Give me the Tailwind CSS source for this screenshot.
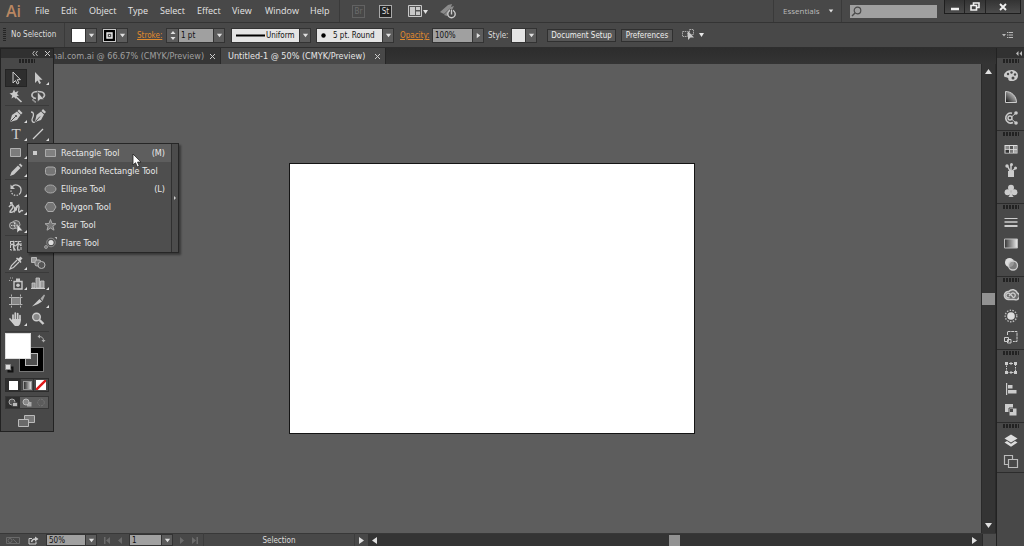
<!DOCTYPE html>
<html lang="en">
<head>
<meta charset="utf-8">
<title>Illustrator workspace</title>
<script src="https://cdn.jsdelivr.net/npm/@tailwindcss/browser@4"></script>
</head>
<body class="h-screen overflow-hidden flex flex-col bg-[#484848] text-[#dedede] font-['DejaVu_Sans_Condensed','DejaVu_Sans',sans-serif] text-[8px] leading-[12px] relative">

<svg class="hidden" aria-hidden="true">
  <symbol id="down" viewBox="0 0 8 8"><path d="M1 2h6L4 6z" fill="#e0e0e0"/></symbol>
  <symbol id="grip" viewBox="0 0 16 4"><path d="M0 1h16M0 3h16" stroke="#161616" stroke-width="1.4" stroke-dasharray="2 1"/></symbol>
  <symbol id="corner" viewBox="0 0 4 4"><path d="M4 0v4H0z" fill="#ddd"/></symbol>
</svg>

<!-- Menu bar -->
<header class="h-[23px] shrink-0 flex items-center border-b border-[#343434] bg-[#484848]">
  <span class="w-[30px] pl-1.5 shrink-0 text-[16px] leading-[22px] font-['Open_Sans',sans-serif] font-semibold text-[#b98762]">Ai</span>
  <nav class="flex shrink-0 font-['Open_Sans','Noto_Sans',sans-serif] text-[9px] leading-[22px] text-[#e4e4e4]">
    <button class="w-[26px] text-left pl-[5px]">File</button>
    <button class="w-[28px] text-left pl-[5px]">Edit</button>
    <button class="w-[39px] text-left pl-[5px]">Object</button>
    <button class="w-[32px] text-left pl-[5px]">Type</button>
    <button class="w-[37px] text-left pl-[5px]">Select</button>
    <button class="w-[35px] text-left pl-[5px]">Effect</button>
    <button class="w-[33px] text-left pl-[5px]">View</button>
    <button class="w-[45px] text-left pl-[5px]">Window</button>
    <button class="w-[34px] text-left pl-[5px]">Help</button>
  </nav>
  <div class="flex items-center h-full shrink-0 pl-[12px] border-l border-[#3a3a3a]">
    <button class="w-[13px] h-[13px] border border-[#626262] text-[#6c6c6c] leading-[11px] text-center" aria-label="Bridge">Br</button>
    <button class="w-[13px] h-[13px] ml-[14px] border border-[#aaa] bg-[#222] text-[#ddd] leading-[11px] text-center" aria-label="Stock">St</button>
    <button class="ml-[16px]" aria-label="Arrange documents"><svg width="22" height="13" viewBox="0 0 22 13"><path d="M.5.5h13v11H.5z" fill="#555" stroke="#c8c8c8"/><path d="M2 2h5v8H2zM8 2h4v3H8zM8 6.500h4V10H8z" fill="#c8c8c8"/><path d="M15 5h5l-2.500 4z" fill="#e0e0e0"/></svg></button>
    <button class="ml-[10px]" aria-label="GPU performance"><svg width="18" height="16" viewBox="0 0 18 16"><path d="M0 9L8 2l4-1-1 3-7 7zM4 12l7-8 3-1-2 4-5 6z" fill="#8c8c8c"/><circle cx="11.500" cy="11" r="3.700" fill="#484848" stroke="#ccc" stroke-width="1.400"/><path d="M11.500 6v4.500" stroke="#484848" stroke-width="3"/><path d="M11.500 6.500v5" stroke="#ccc" stroke-width="1.400"/></svg></button>
  </div>
  <div class="grow"></div>
  <button class="shrink-0 w-[69px] h-full flex items-center gap-2 pl-[9px] border-x border-[#3a3a3a] font-['Open_Sans',sans-serif] text-[8px] text-[#bbb]">Essentials <svg class="w-1.5 h-1.5"><use href="#down"/></svg></button>
  <label class="shrink-0 ml-2 flex items-center w-[87px] h-[13px] bg-[#a0a0a0]">
    <svg class="shrink-0 ml-px" width="11" height="11" viewBox="0 0 11 11" fill="none" stroke="#4a4a4a"><circle cx="6.500" cy="4.500" r="3.300" stroke-width="1.200"/><path d="M4 7L1 10" stroke-width="1.500"/></svg>
    <input type="search" aria-label="Search" class="min-w-0 grow h-full bg-transparent outline-none text-black">
  </label>
  <div class="shrink-0 self-start flex ml-[7px] mr-[3px] h-[14px] border border-t-0 border-[#1e1e1e] bg-linear-to-b from-[#333] to-[#4c4c4c]">
    <button class="w-[20px] border-r border-[#222] flex items-center justify-center" aria-label="Minimize"><svg width="8" height="8"><path d="M0 6h8" stroke="#f0f0f0" stroke-width="2.500"/></svg></button>
    <button class="w-[21px] border-r border-[#222] flex items-center justify-center" aria-label="Restore"><svg width="10" height="9" fill="none" stroke="#f0f0f0" stroke-width="1.600"><path d="M3.500 3V1h5.500v4.500H7"/><path d="M1 3.500h5.500V8H1z"/></svg></button>
    <button class="w-[34px] flex items-center justify-center" aria-label="Close"><svg width="8" height="8"><path d="M1 1l6 6M7 1L1 7" stroke="#f0f0f0" stroke-width="1.900"/></svg></button>
  </div>
</header>

<!-- Control bar -->
<section class="h-[25px] shrink-0 flex items-center border-b border-[#2e2e2e] bg-[#484848] pl-[3px]" aria-label="Control">
  <svg width="3" height="14" class="shrink-0"><path d="M1.500 0v14" stroke="#252525" stroke-width="3" stroke-dasharray="1 1"/></svg>
  <span class="w-[59px] h-full leading-[24px] pl-[5px] shrink-0 border-r border-[#3a3a3a] whitespace-nowrap">No Selection</span>
  <div class="flex shrink-0 h-[15px] ml-[6px] border border-[#333]">
    <button class="w-[13px] bg-white" aria-label="Fill"></button>
    <button class="w-[11px] bg-[#5c5c5c] border-l border-[#333] flex items-center justify-center" aria-label="Fill options"><svg class="w-[7px] h-[7px]"><use href="#down"/></svg></button>
  </div>
  <div class="flex shrink-0 h-[15px] ml-[5px] border border-[#333]">
    <button class="w-[13px] bg-black border border-[#c8c8c8] flex items-center justify-center" aria-label="Stroke colour"><svg width="7" height="7"><path d="M1 1h5v5H1z" fill="#555" stroke="#eee" stroke-width="1.400"/><path d="M3 3h1v1H3z" fill="#eee"/></svg></button>
    <button class="w-[11px] bg-[#5c5c5c] border-l border-[#333] flex items-center justify-center" aria-label="Stroke options"><svg class="w-[7px] h-[7px]"><use href="#down"/></svg></button>
  </div>
  <label for="stroke" class="w-[29px] shrink-0 ml-[9px] pt-0.5"><a href="#" class="text-[#e08a2e] underline underline-offset-1">Stroke:</a></label>
  <div class="flex shrink-0 h-[15px] border border-[#333]">
    <button class="w-[12px] bg-[#5c5c5c] border-r border-[#333] flex items-center justify-center" aria-label="Stroke weight step"><svg width="8" height="11" fill="#e0e0e0"><path d="M1.500 4h5L4 1zM1.500 7h5L4 10z"/></svg></button>
    <input id="stroke" value="1 pt" class="w-[34px] bg-[#a0a0a0] text-[#111] pl-0.5 pt-0.5 outline-none">
    <button class="w-[11px] bg-[#5c5c5c] border-l border-[#333] flex items-center justify-center" aria-label="Stroke presets"><svg class="w-[7px] h-[7px]"><use href="#down"/></svg></button>
  </div>
  <div class="flex shrink-0 h-[15px] ml-[6px] border border-[#333]">
    <div class="w-[67px] bg-[#e4e4e4] flex items-center justify-between pl-1 pr-0.5">
      <svg class="shrink-0" width="29" height="3"><path d="M0 1.500h29" stroke="#000" stroke-width="2"/></svg>
      <select aria-label="Width profile" class="appearance-none bg-transparent text-[#111] outline-none w-[31px] pt-0.5"><option>Uniform</option></select>
    </div>
    <span class="w-[11px] bg-[#5c5c5c] border-l border-[#333] flex items-center justify-center"><svg class="w-[7px] h-[7px]"><use href="#down"/></svg></span>
  </div>
  <div class="flex shrink-0 h-[15px] ml-[5px] border border-[#333]">
    <div class="w-[65px] bg-[#e4e4e4] flex items-center gap-[7px] pl-1">
      <svg width="5" height="5"><circle cx="2.500" cy="2.500" r="2.200"/></svg>
      <select aria-label="Brush" class="appearance-none bg-transparent text-[#111] outline-none w-[48px] pt-0.5"><option>5 pt. Round</option></select>
    </div>
    <span class="w-[11px] bg-[#5c5c5c] border-l border-[#333] flex items-center justify-center"><svg class="w-[7px] h-[7px]"><use href="#down"/></svg></span>
  </div>
  <label for="opacity" class="w-[32px] shrink-0 ml-[6px] pt-0.5"><a href="#" class="text-[#e08a2e] underline underline-offset-1">Opacity:</a></label>
  <div class="flex shrink-0 h-[15px] border border-[#333]">
    <input id="opacity" value="100%" class="w-[39px] bg-[#a0a0a0] text-[#111] pl-0.5 pt-0.5 outline-none">
    <button class="w-[11px] bg-[#5c5c5c] border-l border-[#333] flex items-center justify-center" aria-label="Opacity slider"><svg class="w-[7px] h-[7px] -rotate-90"><use href="#down"/></svg></button>
  </div>
  <span class="w-[23px] shrink-0 ml-[4px] pt-0.5">Style:</span>
  <div class="flex shrink-0 h-[15px] border border-[#333]">
    <button class="w-[13px] bg-[#e4e4e4]" aria-label="Graphic style"></button>
    <button class="w-[11px] bg-[#5c5c5c] border-l border-[#333] flex items-center justify-center" aria-label="Style options"><svg class="w-[7px] h-[7px]"><use href="#down"/></svg></button>
  </div>
  <button class="shrink-0 w-[69px] h-[13px] leading-[12px] ml-[10px] border border-[#303030] bg-[#565656] text-[#eee] whitespace-nowrap">Document Setup</button>
  <button class="shrink-0 w-[52px] h-[13px] leading-[12px] ml-[5px] border border-[#303030] bg-[#565656] text-[#eee]">Preferences</button>
  <button class="shrink-0 ml-[9px]" aria-label="Select similar"><svg width="24" height="12" viewBox="0 0 24 12"><path d="M.5 2.500h5v5h-5zM7.500.5h4v5h-4z" fill="none" stroke="#aaa" stroke-dasharray="1.500 .7"/><path d="M6 2v9l2.500-2.500H12z" fill="#c8c8c8"/><path d="M17 4h5l-2.500 4z" fill="#e8e8e8"/></svg></button>
  <div class="grow"></div>
  <button class="shrink-0 mr-[11px]" aria-label="Panel menu"><svg width="11" height="8"><path d="M0 3h4L2 5.500z" fill="#bbb"/><path d="M5 1.500h6M5 4h6M5 6.500h6" stroke="#bbb" stroke-dasharray="1 .6 9"/></svg></button>
</section>

<div class="grow min-h-0 flex">
  <!-- Document window -->
  <main class="grow min-w-0 flex flex-col">
    <div class="h-[16px] shrink-0 flex text-[9px] leading-[16px] bg-linear-to-b from-[#2d2d2d] to-[#343434]">
      <div class="w-[221px] pl-[52px] pr-[5px] flex justify-between items-center bg-[#363636] border-r border-[#2a2a2a] text-[#a0a0a0]">
        <span class="whitespace-nowrap">nal.com.ai @ 66.67% (CMYK/Preview)</span>
        <button aria-label="Close tab" class="text-[#ccc]"><svg width="5" height="5"><path d="M0 0l5 5M5 0L0 5" stroke="currentColor"/></svg></button>
      </div>
      <div class="w-[165px] pl-[7px] pr-[5px] flex justify-between items-center bg-[#484848] border-r border-[#262626] text-[#e6e6e6]">
        <span class="whitespace-nowrap">Untitled-1 @ 50% (CMYK/Preview)</span>
        <button aria-label="Close tab" class="text-[#ccc]"><svg width="5" height="5"><path d="M0 0l5 5M5 0L0 5" stroke="currentColor"/></svg></button>
      </div>
    </div>
    <div class="grow min-h-0 flex">
      <div class="grow flex items-center justify-center bg-[#5d5d5d] pl-[2px]">
        <div class="w-[406px] h-[271px] bg-white border border-[#151515]"></div>
      </div>
      <div class="w-[15px] shrink-0 bg-[#343434] flex flex-col items-center justify-between py-1 border-x border-[#2a2a2a]">
        <svg class="w-[9px] h-[7px]" viewBox="0 0 9 7"><path d="M1 6h7L4.500 1z" fill="#e0e0e0"/></svg>
        <div class="w-full h-[12px] bg-[#929292]"></div>
        <svg class="w-[9px] h-[7px]" viewBox="0 0 9 7"><path d="M1 1h7L4.500 6z" fill="#e0e0e0"/></svg>
      </div>
    </div>
    <!-- Status bar -->
    <footer class="h-[13px] shrink-0 flex items-center bg-[#484848] border-t border-[#383838]">
      <svg class="shrink-0 ml-[6px]" width="14" height="9" fill="none" stroke="#6a6a6a"><path d="M.5 1.500h13v6H.5z"/><circle cx="4" cy="4.500" r="2"/><path d="M7 3l4 4"/></svg>
      <svg class="shrink-0 ml-[8px]" width="11" height="9" fill="none" stroke="#ccc"><path d="M4 2.500H1v5.500h7V5.500"/><path d="M3.500 6C4 3.500 6 3 7.500 3" stroke-width="1.300"/><path d="M7 .5L10.500 3 7 5.500z" fill="#ccc" stroke="none"/></svg>
      <div class="flex shrink-0 h-[12px] ml-[7px] border border-[#333]">
        <input aria-label="Zoom" value="50%" class="w-[38px] bg-[#a0a0a0] text-[#111] pl-0.5 pt-0.5 outline-none">
        <button class="w-[11px] bg-[#5c5c5c] border-l border-[#333] flex items-center justify-center" aria-label="Zoom presets"><svg class="w-[7px] h-[7px]"><use href="#down"/></svg></button>
      </div>
      <svg class="shrink-0 ml-[7px]" width="20" height="7" fill="#6b6b6b"><path d="M0 0h1.500v7H0zM6 0v7L2 3.500zM18 0v7l-4-3.500z"/></svg>
      <div class="flex shrink-0 h-[12px] ml-[5px] border border-[#333]">
        <input aria-label="Artboard" value="1" class="w-[31px] bg-[#a0a0a0] text-[#111] pl-0.5 pt-0.5 outline-none">
        <button class="w-[11px] bg-[#5c5c5c] border-l border-[#333] flex items-center justify-center" aria-label="Artboard list"><svg class="w-[7px] h-[7px]"><use href="#down"/></svg></button>
      </div>
      <svg class="shrink-0 ml-[7px]" width="19" height="7" fill="#6b6b6b"><path d="M0 0v7l4-3.500zM12 0v7l4-3.500zM16.500 0H18v7h-1.500z"/></svg>
      <span class="shrink-0 w-[152px] ml-[4px] pt-0.5 text-center border-x border-[#3c3c3c]">Selection</span>
      <button class="shrink-0 ml-[4px]" aria-label="Status options"><svg width="5" height="7"><path d="M0 0v7l5-3.500z" fill="#e0e0e0"/></svg></button>
      <div class="grow h-full ml-[4px] flex items-center justify-between bg-[#343434] pl-[4px] pr-[5px]">
        <svg width="5" height="7"><path d="M5 0v7L0 3.500z" fill="#e0e0e0"/></svg>
        <div class="w-[11px] h-[11px] bg-[#929292]"></div>
        <svg width="5" height="7"><path d="M0 0v7l5-3.500z" fill="#e0e0e0"/></svg>
      </div>
      <div class="w-[14px] h-full bg-[#4c4c4c] border-l border-[#2a2a2a]"></div>
    </footer>
  </main>

  <!-- Collapsed panel dock -->
  <aside class="w-[28px] shrink-0 bg-[#484848] border-l border-[#222]">
    <div class="h-[10px] bg-[#313131] flex items-center justify-end pr-0.5"><svg width="6" height="5" fill="#bbb"><path d="M2.500 0v5L0 2.500zM6 0v5L3.500 2.500z"/></svg></div>
    <div class="border-b border-[#2c2c2c] h-[73px] flex flex-col items-center">
      <svg class="w-4 h-1 mt-px mb-0.5"><use href="#grip"/></svg>
      <button class="h-[21px]" aria-label="Color"><svg width="16" height="16" viewBox="0 0 16 16"><path d="M8.500 2C4 2 1 5 1 7.500S4 9 5 10s-1 3 4 3c4 0 6-2.500 6-5.500S12.500 2 8.500 2z" fill="#ccc"/><g fill="#484848"><circle cx="5" cy="6" r="1.200"/><circle cx="8.500" cy="4.500" r="1.200"/><circle cx="12" cy="6.500" r="1.200"/><circle cx="10" cy="10" r="1.500"/></g></svg></button>
      <button class="h-[21px]" aria-label="Color guide"><svg width="16" height="16" viewBox="0 0 16 16"><defs><linearGradient id="cg" x1="0" y1="1" x2="1" y2="0"><stop offset="0" stop-color="#111"/><stop offset="1" stop-color="#eee"/></linearGradient></defs><path d="M2.500 2.500c6 0 11 4.500 11 11h-11z" fill="url(#cg)" stroke="#ccc"/></svg></button>
      <button class="h-[21px]" aria-label="Recolor"><svg width="16" height="16" viewBox="0 0 16 16" fill="none" stroke="#ccc"><path d="M9 3.200A5 5 0 1 0 10 12.500" stroke-width="1.600"/><circle cx="7" cy="8" r="2" stroke-width="1.400"/><path d="M8.500 7L13 3M8.500 9l4.500 4"/><g fill="#ccc" stroke="none"><circle cx="13" cy="3" r="1.800"/><circle cx="13" cy="13" r="1.800"/></g></svg></button>
    </div>
    <div class="border-b border-[#2c2c2c] h-[73px] flex flex-col items-center">
      <svg class="w-4 h-1 mt-px mb-0.5"><use href="#grip"/></svg>
      <button class="h-[21px]" aria-label="Swatches"><svg width="16" height="16" viewBox="0 0 16 16"><path d="M1.500 4h13v8.500h-13z" fill="#ddd"/><path d="M2.500 5H6v3H2.500z" fill="#888"/><path d="M6.800 5H10v3H6.800z" fill="#555"/><path d="M10.800 5H14v3h-3.200z" fill="#999"/><path d="M2.500 8.800H6v3H2.500z" fill="#333"/><path d="M6.800 8.800H10v3H6.800z" fill="#777"/><path d="M10.800 8.800H14v3h-3.200z" fill="#aaa"/></svg></button>
      <button class="h-[21px]" aria-label="Brushes"><svg width="16" height="16" viewBox="0 0 16 16"><path d="M5 9h6v6H5z" fill="#ccc"/><path d="M7 9L4.500 4M8 9V3M9 9l4-3" stroke="#ccc" stroke-width="1.500"/><circle cx="4" cy="4" r="1.700" fill="#ccc"/><circle cx="8.500" cy="2.500" r="1.500" fill="#ccc"/><circle cx="12.500" cy="6" r="1.500" fill="#ccc"/></svg></button>
      <button class="h-[21px]" aria-label="Symbols"><svg width="16" height="16" viewBox="0 0 16 16" fill="#ccc"><circle cx="8" cy="4.700" r="3"/><circle cx="4.600" cy="9.300" r="3"/><circle cx="11.400" cy="9.300" r="3"/><path d="M7.300 7h1.400c0 4 .5 5.500 2 7H5.300c1.500-1.500 2-3 2-7z"/></svg></button>
    </div>
    <div class="border-b border-[#2c2c2c] h-[73px] flex flex-col items-center">
      <svg class="w-4 h-1 mt-px mb-0.5"><use href="#grip"/></svg>
      <button class="h-[21px]" aria-label="Stroke"><svg width="16" height="16" viewBox="0 0 16 16" stroke="#ccc"><path d="M1.500 4.500h13"/><path d="M1.500 8h13" stroke-width="1.500"/><path d="M1.500 12h13" stroke-width="2"/></svg></button>
      <button class="h-[21px]" aria-label="Gradient"><svg width="16" height="16" viewBox="0 0 16 16"><defs><linearGradient id="gr"><stop offset="0" stop-color="#333"/><stop offset="1" stop-color="#eee"/></linearGradient></defs><path d="M1.500 4h13v9h-13z" fill="url(#gr)" stroke="#bbb"/></svg></button>
      <button class="h-[21px]" aria-label="Transparency"><svg width="16" height="16" viewBox="0 0 16 16"><circle cx="6.500" cy="6.500" r="4.500" fill="#ddd"/><circle cx="10" cy="9.500" r="4.500" fill="#888" fill-opacity=".8" stroke="#ccc" stroke-width="1.300"/></svg></button>
    </div>
    <div class="border-b border-[#2c2c2c] h-[73px] flex flex-col items-center">
      <svg class="w-4 h-1 mt-px mb-0.5"><use href="#grip"/></svg>
      <button class="h-[21px]" aria-label="Libraries"><svg width="16" height="16" viewBox="0 0 16 16" fill="none" stroke="#ccc"><path d="M5 12.500a4 4 0 1 1 .8-8A5 5 0 0 1 14.300 6a3.500 3.500 0 0 1-2.800 6.500z" fill="#6e6e6e" stroke-width="1.500"/><path d="M10 10L7 7a2.300 2.300 0 1 0-.5 3.500M6 9l2.500-2.500a2.300 2.300 0 1 1 1 4" stroke-width="1.300"/></svg></button>
      <button class="h-[21px]" aria-label="Appearance"><svg width="16" height="16" viewBox="0 0 16 16"><circle cx="8" cy="8" r="3.800" fill="#ddd"/><circle cx="8" cy="8" r="5.800" fill="none" stroke="#bbb" stroke-width="1.400" stroke-dasharray="1.500 1.300"/></svg></button>
      <button class="h-[21px]" aria-label="Graphic styles"><svg width="16" height="16" viewBox="0 0 16 16" fill="none" stroke="#ccc"><path d="M4.500 6V2.500h9.500v10h-4" stroke-dasharray="3 .6"/><path d="M1.500 8.500h4v4h-4zM4.500 10.500h3.500v3.500H4.500z"/></svg></button>
    </div>
    <div class="border-b border-[#2c2c2c] h-[73px] flex flex-col items-center">
      <svg class="w-4 h-1 mt-px mb-0.5"><use href="#grip"/></svg>
      <button class="h-[21px]" aria-label="Transform"><svg width="16" height="16" viewBox="0 0 16 16"><path d="M3.500 3.500h9v9h-9z" fill="none" stroke="#ccc" stroke-dasharray="1.500 1"/><path d="M2 2h3v3H2zM11 2h3v3h-3zM2 11h3v3H2zM11 11h3v3h-3zM7 2.500h2v2H7zM7 11.500h2v2H7z" fill="#ccc"/></svg></button>
      <button class="h-[21px]" aria-label="Align"><svg width="16" height="16" viewBox="0 0 16 16" fill="#ccc"><path d="M3 2h1.200v12H3zM5 4h4.500v3.500H5zM5 9h8.500v3.500H5z"/></svg></button>
      <button class="h-[21px]" aria-label="Pathfinder"><svg width="16" height="16" viewBox="0 0 16 16"><path d="M2 2h8v8H2z" fill="#ccc"/><path d="M6 6h8v8H6z" fill="#ccc" stroke="#484848"/><path d="M7 7h3v3H7z" fill="#484848"/></svg></button>
    </div>
    <div class="border-b border-[#2c2c2c] h-[50px] flex flex-col items-center">
      <svg class="w-4 h-1 mt-px mb-0.5"><use href="#grip"/></svg>
      <button class="h-[21px]" aria-label="Layers"><svg width="16" height="16" viewBox="0 0 16 16" fill="#ddd"><path d="M8 1.500l6.500 4L8 9.500l-6.500-4z"/><path d="M1.500 9.500L4 8l4 2.700L12 8l2.500 1.500L8 13.800z"/></svg></button>
      <button class="h-[21px]" aria-label="Artboards"><svg width="16" height="16" viewBox="0 0 16 16" fill="#484848" stroke="#bbb" stroke-width="1.200"><path d="M1.500 1.500h8v9h-8z"/><path d="M5.500 5.500h9v8h-9z"/></svg></button>
    </div>
  </aside>
</div>

<!-- Floating tools panel, over the document window -->
<aside class="absolute left-0 top-[48px] w-[54px] bg-[#484848] border border-[#222] pb-[3px]" aria-label="Tools">
  <div class="h-[9px] bg-[#303030] flex items-center justify-end gap-[7px] pr-[3px]">
    <svg width="6" height="5" fill="none" stroke="#bbb"><path d="M2.500 0L.7 2.500l1.800 2.500M5.500 0L3.700 2.500l1.800 2.500"/></svg>
    <svg width="5" height="5"><path d="M0 0l5 5M5 0L0 5" stroke="#ccc"/></svg>
  </div>
  <svg class="w-4 h-1 mt-px ml-[18px] mb-[6px]"><use href="#grip"/></svg>

  <div class="mx-1 grid grid-cols-2 auto-rows-[18px] border-b border-[#3a3a3a] mb-px">
    <button class="relative flex items-center justify-center bg-[#2e2e2e] border border-[#242424]" aria-label="Selection"><svg width="16" height="16" viewBox="0 0 16 16"><path d="M5 2v11l2.500-2.500L9.300 14l1.700-1-1.800-3.300h3.300z" fill="#333" stroke="#ccc"/></svg></button>
    <button class="relative flex items-center justify-center" aria-label="Direct selection"><svg width="16" height="16" viewBox="0 0 16 16"><path d="M5 2v11l2.500-2.500L9.300 14l1.700-1-1.800-3.300h3.300z" fill="#c8c8c8"/></svg><svg class="absolute right-0 bottom-0.5 w-[3px] h-[3px]"><use href="#corner"/></svg></button>
    <button class="relative flex items-center justify-center" aria-label="Magic wand"><svg width="16" height="16" viewBox="0 0 16 16"><path d="M7 8l6.500 6" stroke="#c8c8c8" stroke-width="1.700"/><path d="M6 1.500l1.200 2.700L10.500 3 9 6l2 1.500-2.500.8-.5 2.700-2-2-2.500 1.500.7-3L1.500 5.500l3-.8z" fill="#c8c8c8"/></svg></button>
    <button class="relative flex items-center justify-center" aria-label="Lasso"><svg width="16" height="16" viewBox="0 0 16 16"><path d="M6 10.500C0 9.500.5 3.500 8 3.500s8 5 4 6.500" fill="none" stroke="#c0c0c0" stroke-width="1.700"/><path d="M5 10.500c-2.500-.5-3 2.500-1 2.500s1.500 1 1 1.800" fill="none" stroke="#c0c0c0"/><path d="M7.500 3.500v10.500l2.500-2.500h4z" fill="#ccc" stroke="#484848" stroke-width=".6"/></svg></button>
  </div>
  <div class="mx-1 grid grid-cols-2 auto-rows-[18px] border-b border-[#3a3a3a] mb-px">
    <button class="relative flex items-center justify-center" aria-label="Pen"><svg width="16" height="16" viewBox="0 0 16 16"><path d="M2 14l2-7 5-3.500L12.500 7 9 12z" fill="#c8c8c8"/><path d="M9.500 3L11 1.500 14.500 5 13 6.500z" fill="#c8c8c8"/><path d="M2.500 13.500L7.500 8.500" stroke="#484848"/><circle cx="8" cy="8" r="1.100" fill="#484848"/></svg><svg class="absolute right-0 bottom-0.5 w-[3px] h-[3px]"><use href="#corner"/></svg></button>
    <button class="relative flex items-center justify-center" aria-label="Curvature"><svg width="16" height="16" viewBox="0 0 16 16"><path d="M5 14l1.500-7L11 3.500 14 6.500 11 12z" fill="#c8c8c8"/><path d="M11.500 3L13 1l3 3-1.500 1.500z" fill="#c8c8c8"/><path d="M5.500 13.500L10 8.500" stroke="#484848"/><path d="M5 14C3 15 1 13 2.500 10S4 4 1 4" fill="none" stroke="#c8c8c8" stroke-width="1.300"/></svg></button>
    <button class="relative flex items-center justify-center font-['Liberation_Serif',serif] text-[15px] text-[#d0d0d0]" aria-label="Type">T<svg class="absolute right-0 bottom-0.5 w-[3px] h-[3px]"><use href="#corner"/></svg></button>
    <button class="relative flex items-center justify-center" aria-label="Line segment"><svg width="16" height="16" viewBox="0 0 16 16"><path d="M3 13L13 3" stroke="#d0d0d0" stroke-width="1.300"/></svg><svg class="absolute right-0 bottom-0.5 w-[3px] h-[3px]"><use href="#corner"/></svg></button>
    <button class="relative col-start-1 flex items-center justify-center" aria-label="Rectangle"><svg width="16" height="16" viewBox="0 0 16 16"><path d="M2.500 4.500h10v8h-10z" fill="#7c7c7c" stroke="#b0b0b0"/></svg><svg class="absolute right-0 bottom-0.5 w-[3px] h-[3px]"><use href="#corner"/></svg></button>
    <button class="relative col-start-1 flex items-center justify-center" aria-label="Pencil"><svg width="16" height="16" viewBox="0 0 16 16"><path d="M2 14l1.500-4L10 3.500 12.500 6 6 12.500z" fill="#c8c8c8"/><path d="M10.800 2.700l1.500-1.200 2.200 2.200-1.200 1.500z" fill="#c8c8c8"/></svg><svg class="absolute right-0 bottom-0.5 w-[3px] h-[3px]"><use href="#corner"/></svg></button>
  </div>
  <div class="mx-1 grid grid-cols-2 auto-rows-[18px] border-b border-[#3a3a3a]">
    <button class="relative col-start-1 flex items-center justify-center" aria-label="Rotate"><svg width="16" height="16" viewBox="0 0 16 16" fill="none" stroke="#c8c8c8" stroke-width="1.300"><path d="M4 5A5 5 0 0 1 13 8.500a5 5 0 0 1-2 4"/><path d="M10 13a5 5 0 0 1-7-4.500" stroke-dasharray="1.500 1.300"/><path d="M2.500 2.500v4.500H7z" fill="#c8c8c8" stroke="none"/></svg><svg class="absolute right-0 bottom-0.5 w-[3px] h-[3px]"><use href="#corner"/></svg></button>
    <button class="relative col-start-1 flex items-center justify-center" aria-label="Width"><svg width="16" height="16" viewBox="0 0 16 16" fill="none" stroke="#c8c8c8" stroke-width="1.400"><path d="M1 7c2-3 4-2 4 0s-3 3-3 5c2 1 5-1 6-4s3-3 3-1-1 4 0 5 2-3 4-1"/><path d="M3 2.500l5 7M6 12.500l5-8" stroke-width="1.100"/><path d="M2 2h2.500v2.500H2zM6 7.500h3v3H6z" fill="#c8c8c8" stroke="none"/></svg><svg class="absolute right-0 bottom-0.5 w-[3px] h-[3px]"><use href="#corner"/></svg></button>
    <button class="relative col-start-1 flex items-center justify-center" aria-label="Shape builder"><svg width="16" height="16" viewBox="0 0 16 16"><g fill="#606060" stroke="#b0b0b0"><circle cx="8" cy="6.500" r="4"/><circle cx="5" cy="7.500" r="3.500"/></g><path d="M3 7.500h6M6.500 5v5" stroke="#ccc" stroke-dasharray="1 .6"/><path d="M9 5.500v9.500l2.200-2.200h3.500z" fill="#ddd" stroke="#484848" stroke-width=".5"/></svg><svg class="absolute right-0 bottom-0.5 w-[3px] h-[3px]"><use href="#corner"/></svg></button>
  </div>
  <div class="mx-1 grid grid-cols-2 auto-rows-[18px] border-b border-[#3a3a3a]">
    <button class="relative col-start-1 flex items-center justify-center" aria-label="Mesh"><svg width="16" height="16" viewBox="0 0 16 16" fill="none" stroke="#c8c8c8"><path d="M2.500 4v9M2.500 4.500h10.500v8.500H2.500" stroke-dasharray="3 1"/><path d="M2.500 8c3-3 4 3 6 0s4 0 4.500 1M5 4c3 3-2 5 2 9M10 4c2 3-2 6 0 9" stroke-width="1.300"/></svg></button>
    <button class="relative col-start-1 flex items-center justify-center" aria-label="Eyedropper"><svg width="16" height="16" viewBox="0 0 16 16"><path d="M9 5L3.500 10.500 2 14l3.500-1.500L11 7" fill="none" stroke="#c8c8c8" stroke-width="1.200"/><path d="M8 3.500l1-1 1.500 1L12.500 1.500l2 2-2 2L13.500 7l-1 1z" fill="#ccc"/></svg><svg class="absolute right-0 bottom-0.5 w-[3px] h-[3px]"><use href="#corner"/></svg></button>
    <button class="relative flex items-center justify-center" aria-label="Blend"><svg width="16" height="16" viewBox="0 0 16 16" stroke="#b8b8b8"><path d="M1.500 2.500h5v5h-5z" fill="#999"/><rect x="5" y="5" width="6" height="6" rx="2" fill="#777"/><circle cx="11.500" cy="10" r="3.500" fill="#555"/></svg></button>
  </div>
  <div class="mx-1 grid grid-cols-2 auto-rows-[18px] border-b border-[#3a3a3a] pb-[3px] pt-px">
    <button class="relative flex items-center justify-center" aria-label="Symbol sprayer"><svg width="16" height="16" viewBox="0 0 16 16"><path d="M6 6.500h8V14H6z" fill="none" stroke="#c8c8c8" stroke-width="1.400"/><path d="M8 3.500h4V6H8z" fill="#c8c8c8"/><circle cx="10" cy="10.200" r="1.800" fill="#c8c8c8"/><path d="M2 3h4M1 5.500h4" stroke="#aaa" stroke-dasharray="1 1"/></svg><svg class="absolute right-0 bottom-0.5 w-[3px] h-[3px]"><use href="#corner"/></svg></button>
    <button class="relative flex items-center justify-center" aria-label="Column graph"><svg width="16" height="16" viewBox="0 0 16 16"><path d="M2 8h3v5H2zM6 3h3.500v10H6zM10.500 6h3.500v7h-3.500z" fill="#9a9a9a" stroke="#ccc" stroke-width=".8"/><path d="M1 13.500h14" stroke="#ccc"/></svg><svg class="absolute right-0 bottom-0.5 w-[3px] h-[3px]"><use href="#corner"/></svg></button>
    <button class="relative flex items-center justify-center" aria-label="Artboard"><svg width="16" height="16" viewBox="0 0 16 16"><path d="M4 4.500h8v7H4z" fill="#858585"/><path d="M3.500 1.500v13M12.500 1.500v13M1 4.500h14M1 11.500h14" stroke="#b4b4b4" stroke-dasharray="2 .7 8 .7"/></svg></button>
    <button class="relative flex items-center justify-center" aria-label="Slice"><svg width="16" height="16" viewBox="0 0 16 16"><path d="M2 13.500L9.500 6l2.500 2.500-4 2.500z" fill="#ccc"/><path d="M10.500 5.500l3.500-4 1 .8L12.500 8z" fill="#aaa"/></svg><svg class="absolute right-0 bottom-0.5 w-[3px] h-[3px]"><use href="#corner"/></svg></button>
    <button class="relative flex items-center justify-center" aria-label="Hand"><svg width="16" height="16" viewBox="0 0 16 16"><path d="M5 9.500V4M7.300 8V2M9.700 8V2.500M12 9V4.500M5.500 12L2 8" stroke="#ccc" stroke-width="1.700" stroke-linecap="round"/><path d="M4.200 8h8.700c0 4-1 6-2.500 7H7c-1.500-1-2.800-3.500-2.800-7z" fill="#ccc"/></svg><svg class="absolute right-0 bottom-0.5 w-[3px] h-[3px]"><use href="#corner"/></svg></button>
    <button class="relative flex items-center justify-center" aria-label="Zoom"><svg width="16" height="16" viewBox="0 0 16 16"><circle cx="6.500" cy="6" r="3.800" fill="#888" stroke="#ccc" stroke-width="1.400"/><path d="M9.500 9l4 4" stroke="#ccc" stroke-width="2.400"/></svg></button>
  </div>

  <!-- Fill and stroke swatches -->
  <div class="relative mx-1 mt-px h-[42px]">
    <button aria-label="Stroke" class="absolute left-[14px] top-[14px] w-[25px] h-[25px] bg-black border border-[#777] flex items-center justify-center"><span class="w-[13px] h-[13px] bg-[#505050] border border-[#bbb]"></span></button>
    <button aria-label="Fill" class="absolute left-0 top-0 w-[26px] h-[26px] bg-white border border-[#ddd]"></button>
    <button aria-label="Swap fill and stroke" class="absolute right-[3px] top-px"><svg width="9" height="9" viewBox="0 0 9 9"><path d="M2 2.500c3 0 4.500 1.500 4.500 4" fill="none" stroke="#aaa"/><path d="M3 .5v4L.5 2.500zM4.500 6h4L6.500 8.500z" fill="#aaa"/></svg></button>
    <button aria-label="Default fill and stroke" class="absolute left-0 bottom-[2px]"><svg width="9" height="9" viewBox="0 0 9 9"><path d="M3.500 3.500h4v4h-4z" fill="none" stroke="#111" stroke-width="2"/><path d="M.5.5h5v5h-5z" fill="#ddd" stroke="#888"/></svg></button>
  </div>
  <div class="mx-1 mt-[3px] h-[14px] grid grid-cols-3 border border-[#2c2c2c]">
    <button aria-label="Color" class="bg-[#2e2e2e] flex items-center justify-center"><span class="w-[9px] h-[9px] bg-white"></span></button>
    <button aria-label="Gradient" class="border-x border-[#333] flex items-center justify-center"><span class="w-[9px] h-[9px] bg-linear-to-r from-[#333] to-[#ddd] border border-[#999]"></span></button>
    <button aria-label="None" class="flex items-center justify-center"><svg width="10" height="10"><path d="M0 0h10v10H0z" fill="#fff"/><path d="M0 10L10 0" stroke="#e01818" stroke-width="2.400"/></svg></button>
  </div>
  <div class="mx-1 mt-[4px] h-[13px] grid grid-cols-3 border border-[#363636] bg-[#5c5c5c]">
    <button aria-label="Draw normal" class="bg-[#2e2e2e] flex items-center justify-center"><svg width="10" height="9"><circle cx="4" cy="4" r="3" fill="#555" stroke="#aaa"/><path d="M4.500 4.500h5v4h-5z" fill="#bbb" stroke="#2e2e2e" stroke-width=".6"/></svg></button>
    <button aria-label="Draw behind" class="flex items-center justify-center"><svg width="10" height="9"><path d="M5 4h4.500v4.500H5z" fill="#aaa"/><circle cx="4" cy="4" r="3" fill="#888" stroke="#bbb"/></svg></button>
    <button aria-label="Draw inside" class="flex items-center justify-center"><svg width="10" height="9" fill="none" stroke="#757575"><circle cx="5" cy="4.500" r="3.300" stroke-dasharray="2 1"/></svg></button>
  </div>
  <button aria-label="Screen mode" class="block mx-auto mt-[6px]"><svg width="18" height="13" viewBox="0 0 18 13" stroke="#bbb"><path d="M6.500.5h10v7h-10z" fill="#777"/><path d="M.5 4.500h10v7H.5z" fill="#6a6a6a"/></svg></button>
</aside>

<!-- Shape tools flyout, over the document window -->
<div class="absolute left-[27px] top-[143px] w-[152px] flex bg-[#4e4e4e] border border-[#262626] shadow-[2px_2px_2px_rgba(0,0,0,0.4)] text-[9px] leading-[17px] text-[#e8e8e8]" role="menu">
  <div class="grow flex flex-col">
    <button role="menuitem" class="h-[18px] flex items-center pr-[6px] bg-[#5e5e5e] whitespace-nowrap"><span class="w-1 h-1 ml-[5px] bg-[#ccc]"></span><svg class="ml-[6px] mr-[3px]" width="15" height="14"><path d="M2.500 3.500h10v7h-10z" fill="#808080" stroke="#aaa"/></svg><span class="grow text-left">Rectangle Tool</span><span>(M)</span></button>
    <button role="menuitem" class="h-[18px] flex items-center pl-[15px] pr-[6px] whitespace-nowrap"><svg class="mr-[3px]" width="15" height="14"><rect x="2.500" y="3" width="10" height="8" rx="2.500" fill="#757575" stroke="#aaa"/></svg><span>Rounded Rectangle Tool</span></button>
    <button role="menuitem" class="h-[18px] flex items-center pl-[15px] pr-[6px] whitespace-nowrap"><svg class="mr-[3px]" width="15" height="14"><ellipse cx="7.500" cy="7" rx="5.500" ry="4" fill="#757575" stroke="#aaa"/></svg><span class="grow text-left">Ellipse Tool</span><span>(L)</span></button>
    <button role="menuitem" class="h-[18px] flex items-center pl-[15px] pr-[6px] whitespace-nowrap"><svg class="mr-[3px]" width="15" height="14"><path d="M4.800 2.500h5.400L13 7l-2.800 4.500H4.800L2 7z" fill="#757575" stroke="#aaa"/></svg><span>Polygon Tool</span></button>
    <button role="menuitem" class="h-[18px] flex items-center pl-[15px] pr-[6px] whitespace-nowrap"><svg class="mr-[3px]" width="15" height="14"><path d="M7.500 1.500L9 5.500l4 .2-3.100 2.500 1.100 4-3.500-2.200L4 12.200l1.100-4L2 5.700l4-.2z" fill="#757575" stroke="#aaa"/></svg><span>Star Tool</span></button>
    <button role="menuitem" class="h-[18px] flex items-center pl-[15px] pr-[6px] whitespace-nowrap"><svg class="mr-[3px]" width="15" height="14"><circle cx="8" cy="6.500" r="4.300" fill="none" stroke="#999" stroke-width=".8"/><circle cx="8" cy="6.500" r="2.600" fill="#ddd"/><circle cx="3" cy="11" r="1.500" fill="#777" stroke="#aaa" stroke-width=".8"/><path d="M11.500 1H14v2.500z" fill="#bbb"/></svg><span>Flare Tool</span></button>
  </div>
  <button class="w-[7px] shrink-0 border-l border-[#303030] bg-[#4c4c4c] flex items-center justify-center" aria-label="Tear off"><svg width="2" height="4"><path d="M0 0v4l2-2z" fill="#ccc"/></svg></button>
</div>

<!-- Pointer -->
<svg class="absolute left-[132px] top-[153px]" width="10" height="15" viewBox="0 0 10 15"><path d="M1 1v11l2.500-2.300L5.300 14l2-.9-1.800-4H9z" fill="#fff" stroke="#222" stroke-width=".8"/></svg>
</body>
</html>
